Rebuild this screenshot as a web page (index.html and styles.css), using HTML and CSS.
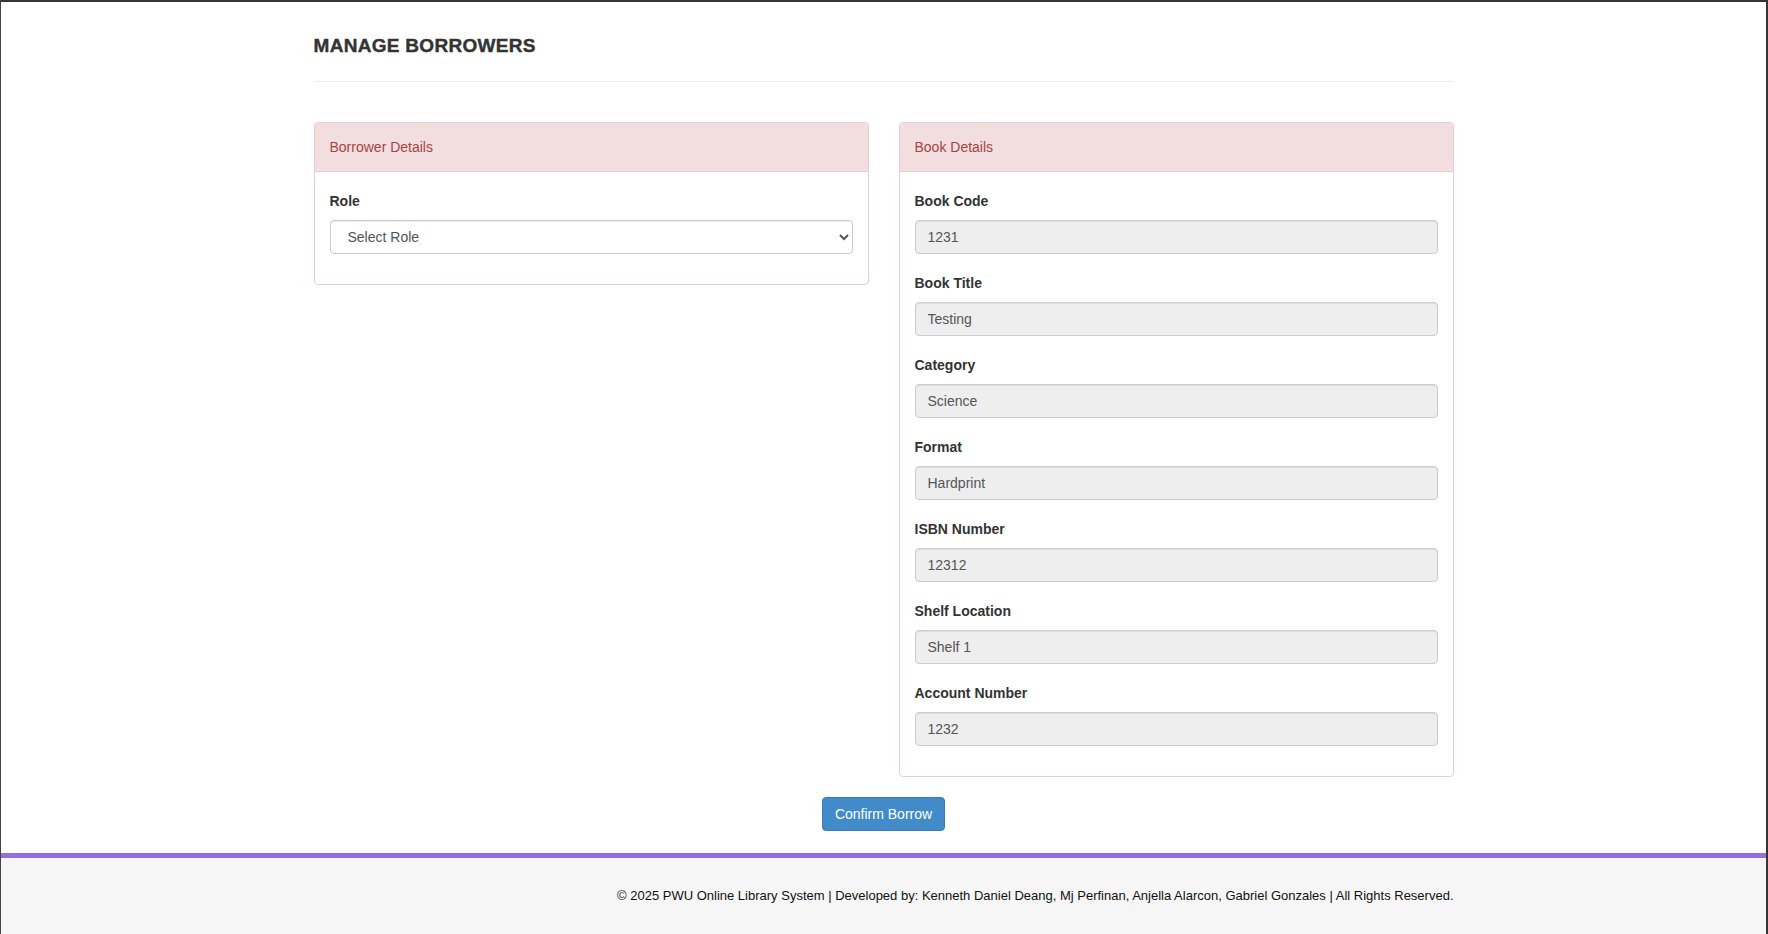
FILE: index.html
```html
<!DOCTYPE html>
<html lang="en">
<head>
<meta charset="utf-8">
<title>Manage Borrowers</title>
<link rel="stylesheet" href="styles.css">
</head>
<body>
<div class="frame">
  <main class="main">
    <div class="container">
      <h3 class="page-title">MANAGE BORROWERS</h3>
      <hr class="divider">
      <div class="row">
        <div class="col">
          <div class="panel">
            <div class="panel-heading">Borrower Details</div>
            <div class="panel-body">
              <div class="form-group">
                <label class="label" for="role">Role</label>
                <select id="role" class="form-control select">
                  <option>Select Role</option>
                  <option>Student</option>
                  <option>Faculty</option>
                </select>
              </div>
            </div>
          </div>
        </div>
        <div class="col">
          <div class="panel">
            <div class="panel-heading">Book Details</div>
            <div class="panel-body">
              <div class="form-group">
                <label class="label">Book Code</label>
                <input class="form-control readonly" value="1231" readonly>
              </div>
              <div class="form-group">
                <label class="label">Book Title</label>
                <input class="form-control readonly" value="Testing" readonly>
              </div>
              <div class="form-group">
                <label class="label">Category</label>
                <input class="form-control readonly" value="Science" readonly>
              </div>
              <div class="form-group">
                <label class="label">Format</label>
                <input class="form-control readonly" value="Hardprint" readonly>
              </div>
              <div class="form-group">
                <label class="label">ISBN Number</label>
                <input class="form-control readonly" value="12312" readonly>
              </div>
              <div class="form-group">
                <label class="label">Shelf Location</label>
                <input class="form-control readonly" value="Shelf 1" readonly>
              </div>
              <div class="form-group">
                <label class="label">Account Number</label>
                <input class="form-control readonly" value="1232" readonly>
              </div>
            </div>
          </div>
        </div>
      </div>
      <div class="actions">
        <button class="btn-primary" type="button">Confirm Borrow</button>
      </div>
    </div>
  </main>
  <footer class="footer">
    <div class="container footer-inner">© 2025 PWU Online Library System | Developed by: Kenneth Daniel Deang, Mj Perfinan, Anjella Alarcon, Gabriel Gonzales | All Rights Reserved.</div>
  </footer>
</div>
</body>
</html>
```

FILE: styles.css
```css
* {
  box-sizing: border-box;
}

html, body {
  margin: 0;
  padding: 0;
  height: 100%;
  overflow: hidden;
}

body {
  font-family: "Liberation Sans", Arial, Helvetica, sans-serif;
  font-size: 14px;
  line-height: 20px;
  color: #333;
  background: #fff;
}

.frame {
  height: 934px;
  display: flex;
  flex-direction: column;
  border-top: 2px solid #353535;
  border-left: 1px solid #444;
  border-right: 2px solid #353535;
}

.main {
  flex: 0 0 auto;
}

.container {
  width: 1170px;
  margin: 0 auto;
  padding: 0 15px;
}

.page-title {
  margin: 33px 0 0;
  font-size: 19px;
  line-height: 21px;
  font-weight: bold;
  letter-spacing: 0.3px;
  color: #333;
  -webkit-text-stroke: 0.4px #333;
}

.divider {
  margin: 25px 0 40px;
  border: 0;
  border-top: 1px solid #eee;
  height: 0;
}

.row {
  display: flex;
  align-items: flex-start;
  margin: 0 -15px;
}

.col {
  flex: 0 0 50%;
  padding: 0 15px;
}

.panel {
  border: 1px solid #ebccd1;
  border-radius: 4px;
  background: #fff;
  margin-bottom: 20px;
}

.panel-heading {
  background: #f2dede;
  color: #a94442;
  padding: 14px 15px;
  line-height: 20px;
  border-bottom: 1px solid #ebccd1;
  border-radius: 3px 3px 0 0;
}

.panel-body {
  padding: 15px;
}

.form-group {
  display: flex;
  flex-direction: column;
  margin-bottom: 15px;
}

.label {
  display: block;
  margin: 4px 0 9px;
  font-weight: bold;
  line-height: 20px;
  color: #333;
}

.form-control {
  display: block;
  width: 100%;
  height: 34px;
  padding: 6px 12px;
  font-family: inherit;
  font-size: 14px;
  line-height: 20px;
  color: #555;
  background: #fff;
  border: 1px solid #ccc;
  border-radius: 4px;
  box-shadow: inset 0 1px 1px rgba(0, 0, 0, 0.075);
  outline: none;
}

.select {
  padding-left: 13px;
}

.readonly {
  background: #eee;
}

.actions {
  display: flex;
  justify-content: center;
}

.btn-primary {
  font-family: inherit;
  font-size: 14px;
  line-height: 20px;
  padding: 6px 12px;
  color: #fff;
  background: #428bca;
  border: 1px solid #357ebd;
  border-radius: 4px;
  cursor: pointer;
}

.footer {
  margin-top: auto;
  border-top: 5px solid #9370db;
  background: #f6f6f6;
  padding: 28px 0 28px;
}

.footer-inner {
  text-align: right;
  color: #111;
  font-size: 13px;
  line-height: 20px;
}
```
